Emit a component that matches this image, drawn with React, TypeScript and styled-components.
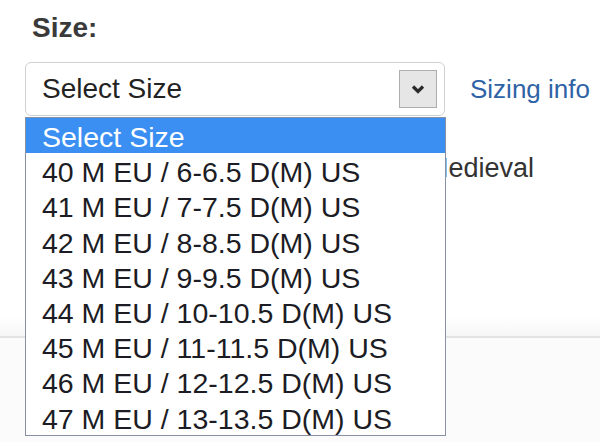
import React from "react";
import styled, { createGlobalStyle } from "styled-components";

const Global = createGlobalStyle`
  html, body { margin: 0; padding: 0; background: #ffffff; }
  body { font-family: "Liberation Sans", Arial, sans-serif; overflow: hidden; }
  * { box-sizing: border-box; }
`;

const Page = styled.div`
  width: 600px;
  height: 442px;
  display: flex;
  flex-direction: column;
  position: relative;
`;

const TopSection = styled.div`
  height: 338px;
  padding: 12px 0 0 25px;
  border-bottom: 2px solid #e3e3e3;
  background: linear-gradient(to bottom, #ffffff 0%, #ffffff 94%, #f6f6f6 100%);
  display: flex;
  flex-direction: column;
`;

const BottomSection = styled.div`
  flex: 1;
  background: #fbfbfb;
`;

const Label = styled.div`
  font-size: 28px;
  line-height: 32px;
  font-weight: bold;
  color: #3a3a3a;
  padding-left: 7px;
`;

const Row = styled.div`
  display: flex;
  align-items: center;
  gap: 25px;
  margin-top: 18px;
`;

const SelectWrap = styled.div`
  position: relative;
  width: 420px;
`;

const SelectBox = styled.div`
  height: 54px;
  border: 1px solid #d0d0d0;
  border-radius: 6px;
  display: flex;
  align-items: center;
  justify-content: space-between;
  padding: 0 7px 0 16px;
  font-size: 28px;
  color: #222;
  background: #fff;
`;

const ArrowButton = styled.div`
  width: 38px;
  height: 38px;
  background: #e6e6e6;
  border: 1px solid #adadad;
  display: flex;
  align-items: center;
  justify-content: center;
`;

const OptionList = styled.ul`
  position: absolute;
  left: 0;
  top: calc(100% + 1px);
  width: 421px;
  margin: 0;
  padding: 0;
  list-style: none;
  background: #fff;
  border: 1px solid #8890a6;
  z-index: 2;
`;

const Option = styled.li<{ $selected?: boolean }>`
  height: 35.2px;
  line-height: 35px;
  padding: 2px 0 0 16px;
  font-size: 28.5px;
  white-space: nowrap;
  color: ${(p) => (p.$selected ? "#ffffff" : "#1c1c24")};
  background: ${(p) => (p.$selected ? "#3b8ff2" : "#ffffff")};
`;

const SizingLink = styled.a`
  font-size: 26px;
  color: #2f63a6;
  text-decoration: none;
`;

const DetailLine = styled.div`
  margin-top: 36px;
  padding-left: 401px;
  font-size: 27px;
  line-height: 32px;
  color: #333;
`;

const sizes = [
  "Select Size",
  "40 M EU / 6-6.5 D(M) US",
  "41 M EU / 7-7.5 D(M) US",
  "42 M EU / 8-8.5 D(M) US",
  "43 M EU / 9-9.5 D(M) US",
  "44 M EU / 10-10.5 D(M) US",
  "45 M EU / 11-11.5 D(M) US",
  "46 M EU / 12-12.5 D(M) US",
  "47 M EU / 13-13.5 D(M) US",
];

export default function App() {
  return (
    <>
      <Global />
      <Page>
        <TopSection>
          <Label>Size:</Label>
          <Row>
            <SelectWrap>
              <SelectBox>
                <span>Select Size</span>
                <ArrowButton>
                  <svg width="14" height="10" viewBox="0 0 14 10">
                    <path d="M2 2.5 L7 7.5 L12 2.5" fill="none" stroke="#2b2b2b" strokeWidth="3.2" />
                  </svg>
                </ArrowButton>
              </SelectBox>
              <OptionList>
                {sizes.map((s, i) => (
                  <Option key={s} $selected={i === 0}>
                    {s}
                  </Option>
                ))}
              </OptionList>
            </SelectWrap>
            <SizingLink href="#">Sizing info</SizingLink>
          </Row>
          <DetailLine>Medieval</DetailLine>
        </TopSection>
        <BottomSection />
      </Page>
    </>
  );
}
